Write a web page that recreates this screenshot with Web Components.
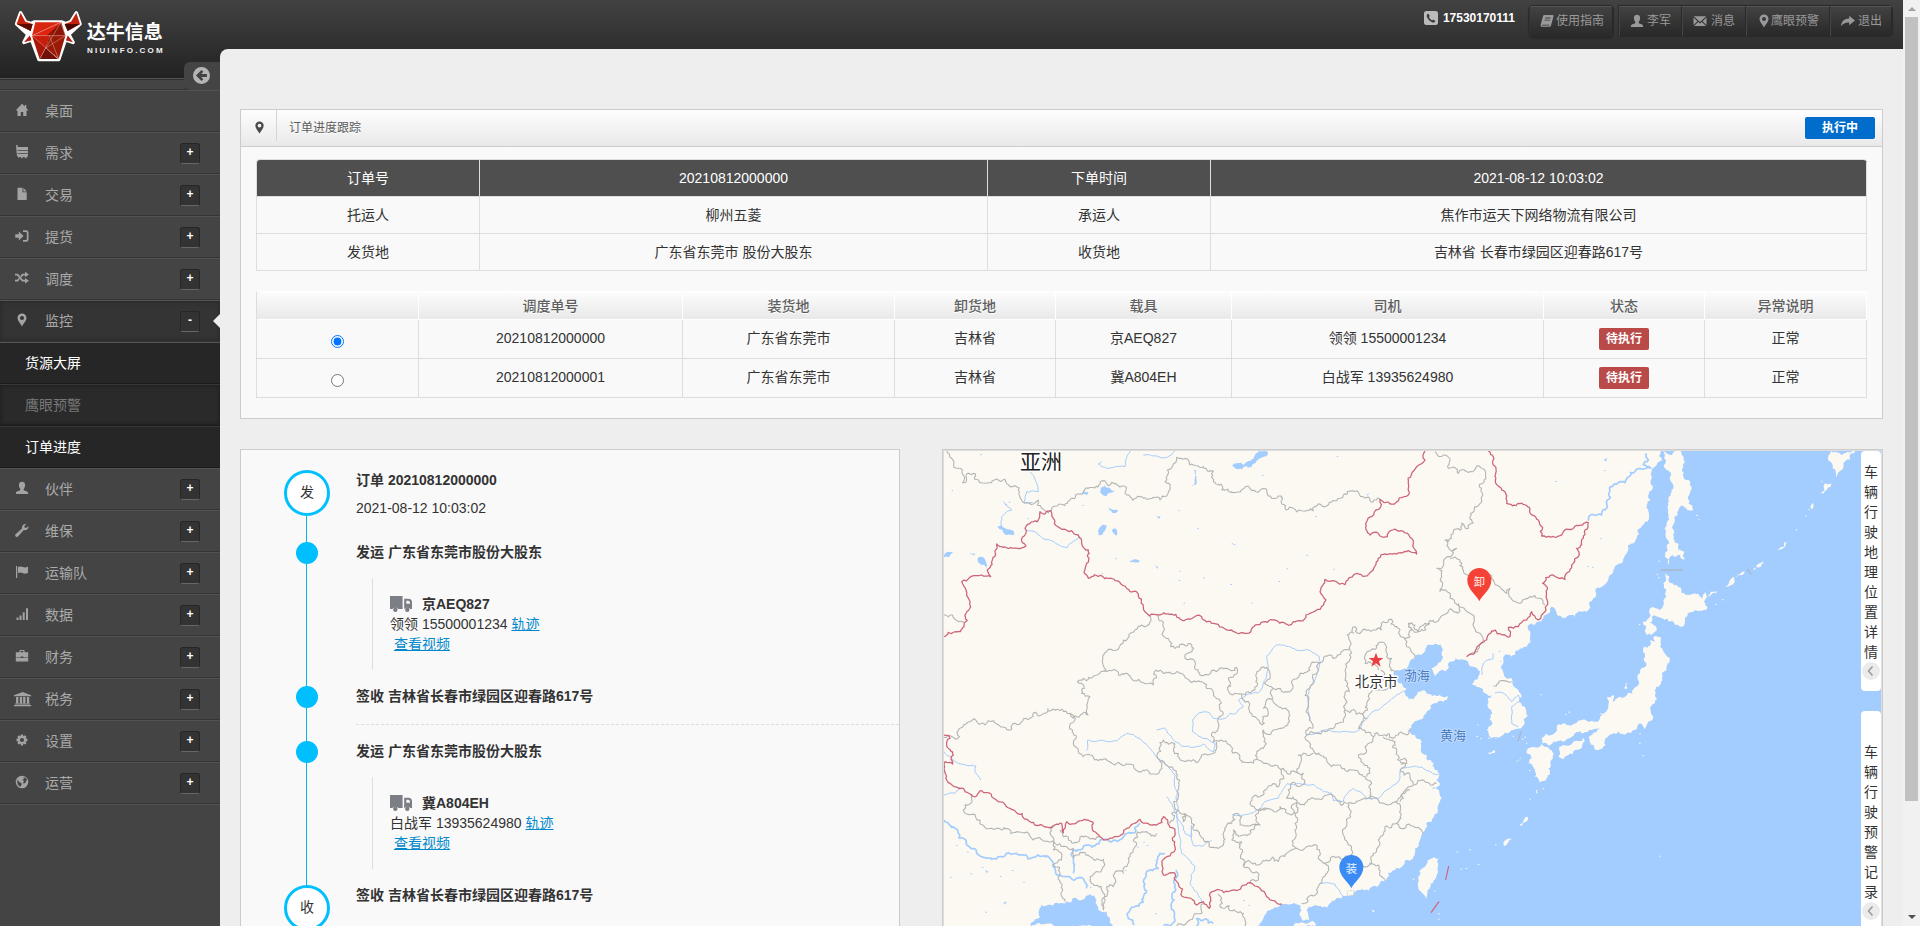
<!DOCTYPE html>
<html lang="zh-CN">
<head>
<meta charset="utf-8">
<title>订单进度跟踪</title>
<style>
html,body{margin:0;padding:0;height:926px;overflow:hidden;background:#eee}
body{font:14px/20px "Liberation Sans","Noto Sans CJK SC",sans-serif;color:#333}
</style>
</head>
<body>
<nf-app></nf-app>
<script>
const define = (name, css, html) => customElements.define(name, class extends HTMLElement {
  constructor() {
    super();
    this.attachShadow({mode: 'open'});
  }
  connectedCallback() {
    this.shadowRoot.innerHTML = `<style>*{box-sizing:border-box}${css}</style>${typeof html === 'function' ? html(this) : html}`;
  }
});

/* ---------- icons, 14 x 14 grid ---------- */
const ICONS = {
  home: '<path d="M7 .8.6 7.4h1.9V13h3.3V9h2.4v4h3.3V7.4h1.9L11.3 5V2H9.8v1.6z"/>',
  cart: '<path d="M1 0h1.6v2H13v3H2.6v.8H13v2.4H2.6V9H13v2.4h-1l-.6 1.8H10l-.5-1.3H8l-.5 1.3H6.3L6 12H4.5L4 13 2 10.8 1.6 7z"/>',
  file: '<path d="M2.5.8h5v4.4h4.2V13H2.5zM8.4.8l3.3 3.6H8.4z"/>',
  signin: '<path d="M.3 5.2h3.5V2.5L8.6 7l-4.8 4.5V8.8H.3zM8 1.3h3.2A2.3 2.3 0 0 1 13.5 3.600v6.800a2.300 2.300 0 0 1-2.300 2.300H8v-1.700h2.800q1 0 1-1V4q0-1-1-1H8z"/>',
  shuffle: '<path d="M0 2.7h3l5 6.1h2V7l4 2.7-4 2.800v-1.900H7.100l-5-6.100H0zM0 8.800h2.100l1.500-1.800 1.200 1.400L3 10.600H0zM5.300 5l1.800-2.300H10V.8l4 2.800-4 2.700V4.500H8L6.500 6.400z"/>',
  pin: '<path fill-rule="evenodd" d="M7 .5a4.500 4.500 0 0 0-4.500 4.500C2.500 7.700 5.200 10 7 13.500 8.800 10 11.500 7.700 11.500 5A4.500 4.500 0 0 0 7 .5zM7 2.900a2 2 0 1 1 0 4 2 2 0 0 1 0-4z"/>',
  user: '<path d="M7 .7c-2.100 0-3.300 1.500-3.100 3.500.2 1.900.8 2.700 1.300 3.600.3.700.2 1.300-.5 1.600L1.800 10.600Q.8 11.200.8 13h12.400q0-1.800-1-2.400L9.300 9.400c-.7-.3-.8-.9-.5-1.600.5-.9 1.100-1.700 1.300-3.600C10.300 2.200 9.100.7 7 .7z"/>',
  wrench: '<path d="M.6 11.200 7 5.500C6.400 3 8.500.5 11.300 1L9.200 3.200l.5 1.400 1.500.5 2.200-2.200c.5 2.700-2 4.800-4.600 4.200L3 13.500c-1.600 1.500-3.900-.8-2.400-2.300z"/>',
  flag: '<path d="M1 1h1.200v12H1zM3 2c2-1 3.500-.6 5 .1 1.600.7 3.300.5 5-.5v6.200c-1.700 1-3.400 1.200-5 .5-1.500-.7-3-1.100-5-.1z"/>',
  bars: '<path d="M1.500 10.500h2V13h-2zM4.500 8.500h2V13h-2zM7.700 5.200h2V13h-2zM11 1.300h2V13h-2z"/>',
  case: '<path d="M.8 3.200h3.600V2q0-1 1-1h3.200q1 0 1 1v1.200h3.600v5.200H8.300V7.600H5.700v.8H.8zM5.600 3.200h2.800V2.100H5.600zM.8 9h12.400v3.400H.8z" fill-rule="evenodd"/>',
  bank: '<path d="M7.500 0 15 3.200v1H0v-1zM1.800 5h2v6.300h-2zM5.100 5h2v6.300h-2zM8 5h2v6.300H8zM11.300 5h2v6.300h-2zM.9 11.600h13.200v1H.9zM0 13h15v1.200H0z"/>',
  gear: '<path fill-rule="evenodd" d="M6 1.500h2l.4 1.700 1.600-.9 1.500 1.500-.9 1.500 1.800.5v2.100l-1.800.5.9 1.600-1.500 1.500-1.600-.9L8 12.500H6l-.5-1.900-1.600.9L2.400 10l.9-1.600-1.800-.5V5.800l1.800-.5-.9-1.500 1.500-1.500 1.600.9zM7 4.900a2.100 2.100 0 1 0 0 4.200 2.100 2.100 0 0 0 0-4.200z"/>',
  globe: '<path fill-rule="evenodd" d="M7 .7a6.300 6.300 0 1 0 0 12.600A6.300 6.300 0 0 0 7 .7zM8 2l3.300 1.300L12 6l-1-.4-.3 1.900L9 8.500l-1-.3L9 6 7.300 4.800 9.200 3.700zM2.400 4.500l1.900 2.700 2 .6.3 1.900-1.400 2C3 10.700 1.700 8 2.400 4.500z"/>',
  phone: '<path fill-rule="evenodd" d="M2.500 0h9Q14 0 14 2.500v9q0 2.500-2.500 2.500h-9Q0 14 0 11.500v-9Q0 0 2.500 0zM4 2.500C2.600 3.400 2.500 5 3.200 6.600c1 2.200 2.600 3.800 4.700 4.600 1.500.5 3 .1 3.500-1.300L9.200 8.400l-1 1C6.800 8.900 5.500 7.500 4.900 6l1-.9z"/>',
  book: '<path fill-rule="evenodd" d="M4.600 1h8.200q1 .2.7 1.200l-2.500 9.300q-.3 1.300-1.600 1.300H1.700Q.2 12.600.6 11L3 2.300Q3.300 1 4.600 1zM5.200 3.500 5 4.400h5.400l.2-.9zM4.600 5.700l-.2.900h5.400l.2-.9zM1.900 10.700q-.2.900.5.9h6.800l.3-.9z"/>',
  mail: '<path d="M.8 2.300h12.400L7 8zM.5 3.600 4.400 7.200.5 11zM13.500 3.600 9.600 7.200l3.900 3.800zM5.200 7.900 7 9.500l1.800-1.600 4.200 4H1z"/>',
  share: '<path d="M8.200 1.800 14 6.500 8.200 11.200V8.500C4.800 8.200 2.300 9.200 0 12.200.4 7.400 3.300 4.700 8.200 4.500z"/>',
  back: '<path fill-rule="evenodd" d="M7 0a7 7 0 1 0 0 14A7 7 0 0 0 7 0zM7 2.500l1.500 1.500-1.700 1.800h4.700v2.500H6.800L8.500 10 7 11.500 2.400 7z"/>',
  truck: '<path fill-rule="evenodd" d="M0 0h8v11.300H5.300a2.200 2.200 0 0 0-3.800 0H0zM9 2.500h2.700q2.300.2 2.300 3v5.800h-1.100a2.200 2.200 0 0 0-3.800 0H9zM10.400 4.100v2.600h2.400q0-2.400-1.200-2.600z"/><ellipse cx="3.400" cy="12" rx="1.400" ry="1.900"/><ellipse cx="11" cy="12" rx="1.400" ry="1.900"/>'
};
define('nf-icon', ':host{display:block;width:14px;height:14px;flex:none}svg{display:block;width:100%;height:100%;overflow:visible;fill:currentColor}',
  el => `<svg viewBox="0 0 14 14" preserveAspectRatio="none">${ICONS[el.getAttribute('name')]}</svg>`);

/* ---------- brand ---------- */
define('nf-logo', ':host{display:block;height:78px;padding:10px 0 0 14px}svg{display:block}', `
<svg width="152" height="54" viewBox="42 30 456 162">
  <g stroke="#fff" stroke-width="11" stroke-linejoin="round" fill="#fff">
    <path d="M62 39 76 65 93 71 104 66H184L197 71 213 65 229 39 240 72 206 103 219 127 196 119 176 178H117L95 119 72 127 84 103 50 72z"/>
  </g>
  <path fill="#c3200d" d="M62 39 50 72 92 93 98 72 76 65z"/><path fill="#5d0c04" d="M50 72l42 21 6-21z"/>
  <path fill="#c3200d" d="M229 39 240 72 203 93 194 72 213 65z"/><path fill="#4d0a05" d="M194 72l46 0-37 21z"/>
  <path fill="#b51a0a" d="M90 106 72 127 95 121zM203 106l16 21-23-6z"/>
  <path stroke="#fff" stroke-width="6" fill="none" d="M105 67 93 106 118 178M184 67 200 106 176 178"/>
  <path fill="#d8260f" d="M106 67h74l-84 40z"/><path fill="#e0230e" d="M180 67 96 107h100z"/><path fill="#8b1507" d="M184 67 196 107H140z"/>
  <path fill="#a81708" d="M96 107h52l-12 38-17 32z"/><path fill="#c91d0b" d="M96 107 137 144 148 107z"/><path fill="#70100a" d="M137 144 119 177h55z"/><path fill="#9a1a08" d="M148 107h48l-20 70-39-33z"/>
  <g stroke="#eda295" stroke-width="1.500" fill="none"><path d="M96 107 182 68 137 144 119 177M96 107h100M96 107l80 70M182 68l14 39-59 37M148 107l28 70"/></g>
  <text x="260" y="118" fill="#fff" font-family="Noto Sans CJK SC,sans-serif" font-size="58" font-weight="700" textLength="228" lengthAdjust="spacingAndGlyphs">达牛信息</text>
  <text x="261" y="159" fill="#f2f2f2" font-family="Liberation Sans,sans-serif" font-size="24" font-weight="700" textLength="227" lengthAdjust="spacing">NIUINFO.COM</text>
</svg>`);

/* ---------- top bar ---------- */
define('nf-top-item', `:host{display:flex;align-items:center;height:30px;padding:0 0 1px 10px;gap:4px;font-size:12px;color:#999;background:linear-gradient(#424242,#282828);border-top:1px solid #555;border-right:1px solid #292929;border-left:1px solid #454545;white-space:nowrap}
:host([solo]){height:32px;padding-bottom:3px;border-radius:4px;border-left-color:#333;box-shadow:0 0 1px 1px #2a2a2a}nf-icon{width:14px;height:14px;margin-top:-1px}`,
  el => `<nf-icon name="${el.getAttribute('icon')}"></nf-icon><slot></slot>`);
define('nf-topbar', `:host{display:flex;height:49px;justify-content:flex-end;padding:6px 11px 0 0;align-items:flex-start}
.tel{display:flex;align-items:center;height:22px;gap:5px;color:#fff;font-weight:700;font-size:12px;margin-right:14px;padding-bottom:1px;margin-top:-1px;padding-top:5px}.tel nf-icon{color:#bbb}
.grp{display:flex;margin-left:6px;box-shadow:0 0 1px 1px #2a2a2a;border-radius:0 4px 4px 0}`, `
<div class="tel"><nf-icon name="phone"></nf-icon><span>17530170111</span></div>
<nf-top-item solo icon="book" style="width:84px;gap:2px">使用指南</nf-top-item>
<div class="grp">
<nf-top-item icon="user" style="width:63px;gap:3px">李军</nf-top-item><nf-top-item icon="mail" style="width:64px">消息</nf-top-item><nf-top-item icon="pin" style="width:84px;gap:0">鹰眼预警</nf-top-item><nf-top-item icon="share" style="width:62px;gap:3px">退出</nf-top-item>
</div>`);

/* ---------- side navigation ---------- */
define('nf-nav-item', `:host{display:flex;align-items:center;height:42px;padding:0 20px 0 15px;border-top:1px solid #525252;border-bottom:1px solid #353535;color:#aaa;background:#444;position:relative}
nf-icon{width:14px;height:14px;margin:-2px 16px 0 0;color:#a3a3a3}:host([icon=bank]) nf-icon{width:16px;margin:0 15px 0 -1px}b{margin-left:auto;width:20px;height:21px;border-radius:3px;background:#333;border:1px solid #262626;border-bottom-color:#666;color:#fff;font-size:12px;line-height:17px;text-align:center}
:host([open]){background:#343434;box-shadow:inset 0 0 5px #262626}
i{position:absolute;right:0;top:13px;border:7px solid transparent;border-right-color:#eee;border-left:0}`,
  el => `<nf-icon name="${el.getAttribute('icon')}"></nf-icon><slot></slot>${el.hasAttribute('plain') ? '' : `<b>${el.hasAttribute('open') ? '-' : '+'}</b>`}${el.hasAttribute('open') ? '<i></i>' : ''}`);
define('nf-sub-item', `:host{display:block;height:42px;line-height:40px;padding-left:25px;color:#fff;background:#262626;border-top:1px solid #383838;border-bottom:1px solid #1b1b1b}:host([muted]){color:#777;background:#2a2a2a;box-shadow:inset 0 0 4px #1a1a1a}:host([first]){border-top-color:#525252}`, '<slot></slot>');
define('nf-sidebar', `:host{display:block;position:relative;height:848px;background:#444;border-top:1px solid #525252}
.strip{height:11px;border-top:1px solid #303030;border-bottom:1px solid #353535}
.toggle{position:absolute;right:0;top:-17px;width:36px;height:29px;background:#444;border-radius:6px 0 0 6px;border-bottom:1px solid #303030;color:#b5b5b5;padding:5px 0 0 9px}.toggle nf-icon{width:17px;height:17px}
.end{border-top:1px solid #525252}`, `
<div class="strip"></div><div class="toggle"><nf-icon name="back"></nf-icon></div>
<nf-nav-item icon="home" plain>桌面</nf-nav-item><nf-nav-item icon="cart">需求</nf-nav-item><nf-nav-item icon="file">交易</nf-nav-item><nf-nav-item icon="signin">提货</nf-nav-item><nf-nav-item icon="shuffle">调度</nf-nav-item>
<nf-nav-item icon="pin" open>监控</nf-nav-item><nf-sub-item first>货源大屏</nf-sub-item><nf-sub-item muted>鹰眼预警</nf-sub-item><nf-sub-item>订单进度</nf-sub-item>
<nf-nav-item icon="user">伙伴</nf-nav-item><nf-nav-item icon="wrench">维保</nf-nav-item><nf-nav-item icon="flag">运输队</nf-nav-item><nf-nav-item icon="bars">数据</nf-nav-item><nf-nav-item icon="case">财务</nf-nav-item><nf-nav-item icon="bank">税务</nf-nav-item><nf-nav-item icon="gear">设置</nf-nav-item><nf-nav-item icon="globe">运营</nf-nav-item><div class="end"></div>`);

/* ---------- order panel ---------- */
define('nf-badge', ':host{display:inline-block;height:22px;line-height:22px;width:50px;text-align:center;border-radius:2px;background:#b94a48;color:#fff;font-size:12px;font-weight:700}:host([wide]){width:70px;background:#006dcc}', '<slot></slot>');
define('nf-panel', `:host{display:block;border:1px solid #ccc;background:#f9f9f9}
header{display:flex;height:37px;border-bottom:1px solid #ccc;background:linear-gradient(#fdfdfd,#e9e9e9);font-size:12px;color:#666;padding-right:7px}
.ic{width:36px;height:31px;border-right:1px solid #d5d5d5;padding:11px 0 0 12px;color:#4a4a4a}.ic nf-icon{width:13px;height:13px}
.t{flex:1;padding:8px 0 0 12px;color:#5c5c5c;text-shadow:0 1px 0 #fff}header ::slotted(*){margin-top:7px}.body{padding:12px 15px 20px}`, `
<header><div class="ic"><nf-icon name="pin"></nf-icon></div><div class="t">订单进度跟踪</div><slot name="status"></slot></header><div class="body"><slot></slot></div>`);
define('nf-order-info', `:host{display:grid;grid-template-columns:223px 508px 223px 656px;border-top:1px solid #ddd;border-left:1px solid #ddd;border-radius:4px 4px 0 0;text-align:center;overflow:hidden}
div{height:37px;line-height:36px;border-right:1px solid #ddd;border-bottom:1px solid #ddd}.h{background:#4f4f4f;color:#fff}`, `
<div class="h">订单号</div><div class="h">20210812000000</div><div class="h">下单时间</div><div class="h">2021-08-12 10:03:02</div>
<div>托运人</div><div>柳州五菱</div><div>承运人</div><div>焦作市运天下网络物流有限公司</div>
<div>发货地</div><div>广东省东莞市 股份大股东</div><div>收货地</div><div>吉林省 长春市绿园区迎春路617号</div>`);
const dispatch = [
  ['20210812000000', '广东省东莞市', '吉林省', '京AEQ827', '领领 15500001234'],
  ['20210812000001', '广东省东莞市', '吉林省', '冀A804EH', '白战军 13935624980']
];
define('nf-dispatch-table', `:host{display:grid;grid-template-columns:162px 264px 212px 161px 176px 312px 161px 162px;margin-top:20px;text-align:center;border-left:1px solid #ddd;border-top:1px solid #fff}
.h{height:28px;line-height:28px;border-right:1px solid #fff;border-bottom:1px solid #fff;background:linear-gradient(#fcfcfc,#e9e9e9);color:#5f5f5f;font-weight:500;text-shadow:0 1px 0 #fff}
.c{height:39px;line-height:37px;border-right:1px solid #ddd;border-bottom:1px solid #ddd}
input{display:block;width:13px;height:13px;margin:15px auto 0}nf-badge{vertical-align:top;margin-top:8px}`,
  () => ['', '调度单号', '装货地', '卸货地', '载具', '司机', '状态', '异常说明'].map(h => `<div class="h">${h}</div>`).join('') +
    dispatch.map((r, i) => `<div class="c"><input type="radio" name="d" ${i ? '' : 'checked'}></div>${r.map(c => `<div class="c">${c}</div>`).join('')}<div class="c"><nf-badge>待执行</nf-badge></div><div class="c">正常</div>`).join(''));

/* ---------- timeline ---------- */
define('nf-step', `:host{display:flex;padding-left:43px}
.rail{width:46px;flex:none;display:flex;flex-direction:column;align-items:center}
.rail::after{content:"";flex:1;width:1px;margin-right:1px;background:#00b7f0}
.dot{width:22px;height:22px;border-radius:50%;background:#00bfff;flex:none}
.big{width:46px;height:46px;border:3px solid #00bfff;background:#fff;line-height:39px;text-align:center}
.body{flex:1;margin-left:26px;min-width:0}`,
  el => `<div class="rail"><div class="dot ${el.hasAttribute('mark') ? 'big' : ''}">${el.getAttribute('mark') || ''}</div></div><div class="body"><slot></slot></div>`);
define('nf-truck', `:host{display:block;height:92px;margin:16px 0 0 16px;border-left:1px solid #ddd;padding:15px 0 0 17px}
.p{display:flex;align-items:center;height:21px;gap:10px;font-weight:700}nf-icon{width:22px;height:16px;color:#7b7e85;margin-top:1px}a{color:#08c;text-decoration:underline}`,
  el => `<div class="p"><nf-icon name="truck"></nf-icon>${el.getAttribute('plate')}</div><div>${el.getAttribute('driver')} <a>轨迹</a></div><div>&nbsp;<a>查看视频</a></div>`);
define('nf-timeline', `:host{display:block;width:660px;height:700px;border:1px solid #ccc;background:#f9f9f9;padding-top:20px}
b{display:block}.d{border-bottom:1px dashed #ddd;height:19px}`, `
<nf-step mark="发" style="height:72px"><b>订单 20210812000000</b><div style="padding-top:8px">2021-08-12 10:03:02</div></nf-step>
<nf-step style="height:144px"><b>发运 广东省东莞市股份大股东</b><nf-truck plate="京AEQ827" driver="领领 15500001234"></nf-truck></nf-step>
<nf-step style="height:55px"><b>签收 吉林省长春市绿园区迎春路617号</b><div class="d"></div></nf-step>
<nf-step style="height:144px"><b>发运 广东省东莞市股份大股东</b><nf-truck plate="冀A804EH" driver="白战军 13935624980"></nf-truck></nf-step>
<nf-step mark="收" style="height:90px"><b>签收 吉林省长春市绿园区迎春路617号</b></nf-step>`);

/* ---------- map ---------- */
let seed = 7;
const rnd = () => (seed = (seed * 16807) % 2147483647) / 2147483647 - .5;
/* Splits each segment around displaced midpoints, for a natural coast or border. */
function trace(str, amp = .22, closed = false, dx = 0) {
  const n = str.trim().split(/[\s,]+/).map(Number), pts = [];
  for (let i = 0; i < n.length; i += 2) pts.push([n[i] + dx, n[i + 1]]);
  if (closed) pts.push(pts[0]);
  let out = 'M' + pts[0];
  const split = (a, b) => {
    const x = b[0] - a[0], y = b[1] - a[1], l = Math.hypot(x, y);
    if (l < 9 || l > 700) { out += 'L' + b.map(v => Math.round(v * 10) / 10); return; }
    const k = rnd() * amp * Math.min(1, 45 / l) * 2, m = [(a[0] + b[0]) / 2 - y * k, (a[1] + b[1]) / 2 + x * k];
    split(a, m); split(m, b);
  };
  for (let i = 1; i < pts.length; i++) split(pts[i - 1], pts[i]);
  return out + (closed ? 'Z' : '');
}
const E = 1410;
const sea = [
 '2192,33 2175,80 2165,115 2162,180 2152,245 2115,305 2090,340 2050,395 2015,440 1990,475 1955,515 1910,530 1880,518 1865,500 1850,522 1825,545 1795,570 1793,615 1755,645 1720,660 1713,685 1745,715 1775,770 1785,800 1782,855 1740,875 1685,895 1675,860 1682,830 1675,790 1685,765 1655,745 1628,735 1648,705 1642,685 1615,665 1595,658 1560,665 1515,708 1505,685 1535,645 1537,625 1520,612 1500,615 1480,640 1455,655 1438,668 1432,690 1400,690 1390,700 1392,718 1415,730 1428,745 1427,768 1450,778 1460,765 1475,752 1495,762 1520,768 1553,768 1540,785 1520,790 1490,815 1450,850 1432,870 1455,885 1475,905 1490,945 1510,968 1512,985 1528,1000 1530,1035 1505,1045 1528,1060 1535,1075 1525,1095 1522,1120 1505,1145 1485,1170 1472,1195 1455,1225 1450,1250 1420,1275 1370,1318 1340,1340 1290,1350 1270,1365 1235,1375 1200,1390 1150,1398 1130,1410 1138,1440 1120,1442 1108,1425 1112,1397 1085,1392 1050,1395 1020,1410 1000,1435 975,1460 975,2200 2900,2200 2900,33',
 '300,1462 330,1430 335,1395 380,1388 410,1385 440,1375 480,1362 500,1380 505,1410 540,1440 558,1462'
];
const isles = [
 '790,33 842,33 848,75 860,120 868,165 880,210 850,198 835,212 822,250 820,295 835,330 853,335 853,360 840,345 818,345 808,375 800,355 808,310 800,250 802,200 812,160 800,90',
 '797,398 830,435 870,465 905,475 915,455 912,485 922,505 900,512 880,515 855,535 848,560 820,545 785,535 755,530 750,548 770,565 765,575 740,585 738,560 728,545 752,525 750,505 780,510 790,480 790,430',
 '750,600 765,605 765,588 782,592 780,620 798,645 800,690 783,725 768,740 765,790 752,810 760,830 745,845 735,868 720,850 700,870 680,880 655,875 640,880 628,885 608,925 590,930 568,905 575,885 600,865 575,870 550,880 515,890 490,905 460,905 425,910 425,895 455,885 490,850 530,848 560,842 590,845 600,830 625,795 622,770 640,765 640,785 675,770 710,740 720,700 735,650 732,620 750,618',
 '490,915 520,905 552,895 545,925 525,930 505,945 490,958 475,950 478,920',
 '400,920 425,912 440,920 458,950 445,985 440,1015 420,1028 402,1010 405,990 385,970 395,955 380,940',
 '262,937 285,930 285,938 268,943', '103,1252 117,1256 112,1290 100,1325 82,1360 78,1376 70,1362 55,1345 55,1315 75,1280 90,1258',
 '1292,33 1365,33 1350,60 1325,90 1308,112 1298,85', '1255,160 1275,130 1298,124 1280,150', '1060,390 1075,372 1090,364 1080,382', '970,445 1000,412 1035,396 1005,425', '921,480 932,455 955,450 935,462',
 '1134,332 1160,306 1150,322', '1232,205 1240,190 1238,207', '355,1160 375,1132 383,1130 365,1150', '312,1218 320,1198 335,1196', '408,1058 413,1048 414,1060', '345,965 362,950 356,962', '675,748 682,728 682,745', '-320,1458 -315,1450 -290,1448 -262,1442 -255,1460'
];
const specks = '1216,226 1186,268 1263,122 945,492 965,478 775,362 770,402 773,412 716,552 496,822 504,815 421,763 718,880 716,908 727,946 170,1235 206,1228 233,1272 182,1286 196,1284 778,1247 285,1213 427,1045 388,1076 102,1352 37,1316 114,1420 115,1436 228,888 240,895 232,853 264,893 285,893 338,887 372,890 366,896 378,908 600,820 888,225 895,238 385,935 387,990 1225,208 -85,1410 -82,1413';
const gray = [
 '50,33 98,128 110,118 113,100 130,100 135,118 150,128 185,128 200,117 225,118 240,140 268,155 285,190 310,192 325,180 335,205 345,212 365,212 378,198 412,190 428,175 460,160 475,145 510,132 518,122 535,137 583,138 590,165 630,170 670,172 690,180 710,168 720,140 705,125 712,90 728,80 740,52 780,75 820,80 850,92 855,128 875,150 910,158 960,145 1010,148 1045,168 1055,192 1090,205 1115,212 1150,212 1180,200 1220,182 1240,165 1268,152 1310,172 1350,176',
 '42,525 68,525 82,542 102,545', '655,527 645,560 612,575 580,600 565,628 535,628 528,690 518,694 450,720 442,725 455,730 455,760 480,770 470,795 474,825 420,820 432,830 422,850 430,880 430,910 445,935 480,945 515,960 560,970 600,972 625,995 660,1002 690,990 690,965',
 '683,527 700,560 702,590 722,620 748,622 748,615 785,615 786,635 765,655 795,665 805,690 835,705 860,695 890,685 918,682 920,702 895,715 893,742 935,762',
 '518,694 545,692 565,705 600,708 610,722 640,728 670,735 678,690 700,700 740,695 770,715 800,725 830,745 868,778 880,820 865,850 845,880 850,905 872,900 900,915 930,950 955,968 980,958',
 '420,820 370,808 312,818 300,835 255,850 200,852 190,842 165,855 108,852 88,890 42,892',
 '935,762 975,750 980,700 1010,682 1003,730 1030,745 1080,755 1085,730 1110,700 1140,680 1170,668 1200,645 1260,630 1252,585 1275,560 1290,580 1355,570 1360,545 1385,538 1395,560 1410,570 1420,592 1440,590 1435,550 1455,555 1465,575 1500,550',
 '935,762 955,785 958,810 975,830 990,850 1003,850 998,830 1015,820 1000,805 1010,780 1028,775 1030,745', '1028,778 1045,800 1072,810 1073,855 1042,868 1000,870 1005,895 1000,925 980,935 980,958 1010,970 1060,985 1105,1000 1110,970 1105,945 1150,940',
 '1170,668 1150,720 1140,745 1135,790 1138,840 1130,885 1160,880 1200,865 1225,850 1245,830 1242,770 1258,755 1245,720 1250,680 1262,632', '1130,885 1140,910 1155,940 1190,960 1230,975 1270,990 1305,1010 1325,1030 1328,1078',
 '1245,812 1295,822 1310,835 1285,865 1330,890 1360,885 1390,895 1430,885 1440,865','1295,822 1310,790 1345,750 1375,745 1360,720 1352,690', '1422,592 1430,620 1450,640 1455,655', '1305,670 1308,640 1335,628 1345,608 1370,622 1370,650 1385,655 1378,680 1395,695', '1305,670 1325,672 1345,690',
 '1330,890 1315,910 1310,935 1285,945 1300,970 1320,985 1310,1010', '1360,890 1395,905 1400,935 1425,970 1410,990 1450,1035 1520,1030', '1450,1035 1420,1060 1395,1085 1340,1075 1255,1090 1220,1080 1180,1070 1140,1078 1100,1088 1070,1075 1075,1050 1125,1030 1120,1000 1105,1000',
 '690,965 725,980 740,1010 745,1060 745,1110 760,1145 765,1120 785,1140 790,1170 820,1195 845,1222 880,1215 880,1180 905,1150 910,1125 935,1130 930,1155 990,1155 985,1120 1010,1105 1050,1100 1090,1120 1098,1088', '690,965 690,920 700,900 735,912 730,930 750,960 800,968 815,945 850,940 860,905',
 '905,1200 910,1170 960,1172 990,1155', '905,1200 935,1205 935,1240 945,1265 940,1278 985,1300 985,1320 960,1330', '1098,1088 1095,1150 1098,1180 1100,1225 1070,1240 1010,1260 940,1278', '1100,1225 1130,1220 1160,1215 1170,1260 1190,1275 1180,1310 1160,1350 1115,1390',
 '1255,1090 1262,1130 1245,1165 1255,1215 1255,1250 1225,1250 1175,1265', '1255,1250 1290,1275 1318,1275 1330,1240 1345,1200 1365,1160 1400,1150 1395,1085','1318,1270 1345,1275 1365,1318','1400,1150 1480,1180', '1060,985 1062,1015 1040,1040 1000,1055 970,1070 960,1090 985,1110 1010,1105',
 '125,1062 100,1110 150,1140 200,1165 260,1175 310,1200 375,1210 430,1225 430,1255 520,1258 515,1290 480,1310 485,1330 515,1350 520,1410 530,1340 550,1340 550,1305 580,1300 595,1255 610,1200 650,1175 680,1180', '375,1155 370,1230 395,1260 370,1275 390,1300 405,1385','390,1170 400,1190 450,1197 510,1190',
 '745,1110 725,1120 718,1150', '820,1390 790,1430 740,1458', '865,1362 870,1400 920,1415 945,1440 945,1458',
 '1515,35 1545,45 1555,85 1585,100 1620,95 1640,78 1668,115 1640,200 1615,265 1595,250 1545,300 1560,330 1580,325 1560,350 1520,385 1535,410 1530,455 1560,460 1590,500 1620,520 1650,580 1655,610 1615,645', '1560,355 1590,360 1600,390 1650,410 1690,420 1730,460 1740,445 1770,490 1800,470 1845,495', '1585,490 1590,512 1540,525 1485,550 1465,575 1440,548','1690,738 1720,722 1745,725',
 '1410,1085 1440,1050', '1410,960 1425,955 1430,970 1412,972'
];
const red = [
 '42,590 102,560 108,520 122,500 118,480 108,450 95,425 120,412 155,405 182,410 172,390 200,312 220,322 262,325 288,318 285,265 300,250 322,245 330,215 362,212 370,235 395,268 425,272 445,285 455,310 475,330 470,370 462,395 475,415 555,422 600,455 622,458 640,500 658,527 685,525 750,537 815,530 850,550 905,570 950,580 1035,540 1100,543 1140,520 1188,480 1170,455 1185,418 1245,434 1275,402 1320,398 1345,355 1390,342 1460,342 1450,310 1412,272 1388,270 1372,290 1345,280 1320,285 1308,268 1325,230 1350,178 1385,192 1435,165 1435,130 1460,80 1485,60 1485,33',
 '42,885 60,895 50,915 70,945 68,972 45,965 42,985 60,1030 100,1045 140,1068 155,1052 205,1085 245,1108 300,1145 375,1155 395,1150 400,1178 410,1145 455,1142 490,1150 510,1190 560,1190 590,1165 630,1138 680,1155 700,1130 720,1162 735,1168 735,1220 695,1265 700,1305 735,1300 745,1330 755,1368 800,1395 820,1385 838,1405 840,1360 870,1350 920,1352 960,1328 990,1345 1010,1370 1055,1392',
 '1675,33 1690,75 1715,150 1730,190 1765,190 1800,208 1825,240 1835,288 1890,287 1905,270 1975,248 1965,270 1960,295 1940,325 1930,370 1905,418 1865,405 1838,430 1848,470 1845,515 1825,540 1805,515 1790,540 1765,560 1735,562 1740,590 1695,570 1670,600 1640,625 1610,650'
];
const rivers = [
 '300,95 320,130 325,155 290,155 282,185 308,188','220,185 245,210 215,230 215,260 250,285','288,270 320,278 345,298 412,323 450,288','515,65 505,72 530,85 585,80 590,52 600,33','640,45 710,53 735,33',
 '470,932 473,900 560,903 590,880 630,895 660,925 690,960 735,1005 745,1100 755,1240 795,1280 780,1330 820,1390','680,870 705,865 725,890 755,918 790,922 820,912 850,935 855,910 810,890 788,875 788,840 805,820 838,818 850,835 885,835 900,820 915,822 940,800 925,780 950,765 985,758 1010,710 1010,650 1040,615 1060,615 1098,630 1130,628 1168,650 1168,680 1155,720 1140,740 1140,840',
 '1130,885 1190,868 1210,875 1285,872 1300,845 1370,790 1430,750','907,1123 955,1123 980,1112 1005,1085 1045,1075 1072,1030 1150,1032 1180,1055 1205,1060 1210,1082 1240,1085 1270,1045 1290,1055 1308,1078 1345,1075 1370,1050 1400,1030 1412,990 1455,978 1490,992 1530,1005','710,1070 745,1140 765,1180 782,1190 785,1155 792,1218 820,1218 845,1200',
 '42,935 90,972 138,978 135,995 152,1020','42,1065 75,1060 90,1040','1170,1330 1215,1332 1240,1370','1690,640 1690,655 1660,670 1655,705','1695,758 1715,758 1745,785 1765,765 1770,785 1745,800 1745,850 1765,860'
];
const wide = ['42,1140 75,1165 110,1215 185,1258 235,1238 355,1250 370,1280 410,1310 440,1315 470,1345','430,1300 430,1230 495,1218 580,1190 630,1150','705,1240 690,1240 685,1285 650,1295 640,1370 600,1410 612,1455','738,1290 732,1380 735,1440 700,1455','2160,80 2115,95 2085,128 2050,135 2040,150 2030,190 2015,225 1975,242','2150,40 2140,75 2165,85','800,1458 800,1435 850,1450'];
const lakes = ['905,78 940,75 962,62 975,45 990,33 1012,33 1010,48 980,62 965,82 925,88','790,88 805,88 800,125 785,138','512,150 525,135 540,145 555,152 530,168 515,162','510,262 530,255 525,272 505,285','545,272 555,265 558,288','535,205 565,212 550,220','200,260 225,265 255,285 230,285','42,345 55,335 70,338 55,352 42,352','145,352 160,352 170,385 148,370','118,340 135,340 132,347','1305,160 1320,158 1315,172','672,375 685,380 682,387','2020,60 2030,52 2032,64','598,362 612,358 630,366 610,366','455,157 475,157 470,165','680,228 692,228 688,236','220,1388 232,1386 226,1394','165,1290 180,1292 172,1300'];
const ponds = '65,150 150,42 555,355 748,392 745,420 820,412 905,310 910,312 760,488 963,488 900,432 1045,423 1070,385 1128,344 1210,386 745,210 800,265 1155,228 1055,170 995,104 1220,48 515,400 235,185 225,192 292,235 328,50 456,195 240,1180 85,1190 105,1205 78,1215 110,1235 155,1280 210,1308 245,1290 345,1250 280,1325 165,1415 470,1335 640,1205 620,1220 650,1215 585,1290 675,1420 940,1380 955,1395 1875,123 2010,295 1972,378 1985,380 2022,90 480,1340 120,1300 60,1310 1710,663 1705,632';
const dots = (s, c, w = 4) => { const n = s.split(/[\s,]+/).map(Number); let r = ''; for (let i = 0; i < n.length; i += 2) r += `M${n[i]} ${n[i + 1]}h${w + (i % 3)}v${w - 1}h-${w}z`; return `<path fill="${c}" d="${r}"/>`; };
define('nf-side-tab', `:host{position:absolute;right:0;top:0;width:20px;height:240px;border-radius:4px;background:#fff;text-align:center;padding-top:11px}
:host([second]){top:260px;padding-top:31px}span{display:block;height:20px}.c{width:18px;height:18px;border-radius:50%;background:#ebebeb;margin:0 auto}svg{display:block}`,
  el => [...el.getAttribute('label')].map(c => `<span>${c}</span>`).join('') + '<div class="c"><svg width="18" height="18"><path d="M10.500 4.500 6.500 9l4 4.500" fill="none" stroke="#999" stroke-width="1.500"/></svg></div>');
const pinPath = 'M0 0C-6-16-36-34-36-62A36 36 0 1 1 36-62C36-34 6-16 0 0z';
define('nf-map', `:host{display:block;position:relative;width:941px;height:700px;border:1px solid #ccc;box-shadow:inset 0 0 0 1px #ddd;padding:1px}
.in{position:relative;width:937px;height:696px;background:#fcf9f2}svg{display:block}.labels{position:absolute;left:0;top:0;overflow:visible}text{font-family:"Noto Sans CJK SC",sans-serif}`, () => {
  const W = '#a3ccff', L = '#fcf9f2', p = (list, a, c, dx) => list.map(s => trace(s, a, c, dx)).join('');
  return `<div class="in"><svg width="937" height="696" viewBox="42 33 2811 2088">
<path fill="${W}" d="${p(sea, .3, true)}"/>
<path fill="${L}" d="${p(isles, .28, true, E)}"/><g transform="translate(${E},0)">${dots(specks, L)}</g>
<path fill="${W}" d="${p(lakes, .25, true)}"/>${dots(ponds, W)}
<g fill="none" stroke-linejoin="round"><path stroke="${W}" stroke-width="3" d="${p(rivers, .12)}"/><path stroke="${W}" stroke-width="5" d="${p(wide, .3)}"/>
<path stroke="#b3b5b5" stroke-width="3.300" d="${p(gray, .34)}"/><path stroke="#cc6577" stroke-width="3.800" d="${p(red, .24)}"/>
<path stroke="#cc6577" stroke-width="3.500" d="M1556 1278 1547 1320M1527 1385 1503 1418"/><path stroke="#a9b8c8" stroke-width="4" d="M2192 390h67M2452 387l12 17M1774 873l-10 30"/></g>
<path fill="#ea3f42" d="M1338 638l6 16h16l-13 10 5 16-14-10-14 10 5-16-13-10h16z"/></svg>
<svg class="labels" width="937" height="696" viewBox="42 33 2811 2088">
<g stroke-linejoin="round" paint-order="stroke" stroke="#fff" stroke-width="9">
<text x="270" y="87" font-size="63" fill="#222">亚洲</text><text x="1274" y="741" font-size="43" fill="#333">北京市</text>
<text x="1421" y="721" font-size="39" fill="#4a7dbf" stroke="#c5dfff" stroke-width="5">渤海</text><text x="1530" y="901" font-size="39" fill="#4a7dbf" stroke="#c5dfff" stroke-width="5">黄海</text></g>
<g transform="translate(1648,484)"><path fill="#f44336" d="${pinPath}" transform="scale(1,1.020)"/><text y="-47" text-anchor="middle" font-size="34" font-weight="500" fill="#ffd9d4">卸</text></g>
<g transform="translate(1264,1345)"><ellipse cy="14" rx="13" ry="8" fill="none" stroke="#cfcfcf" stroke-width="3" stroke-dasharray="5 4"/><path fill="#3b8bf5" d="${pinPath}" transform="scale(1,1.020)"/><text y="-47" text-anchor="middle" font-size="34" font-weight="500" fill="#d8e8ff">装</text></g>
</svg><nf-side-tab label="车辆行驶地理位置详情"></nf-side-tab><nf-side-tab second label="车辆行驶预警记录"></nf-side-tab></div>`;
});

/* ---------- page shell ---------- */
define('nf-scrollbar', `:host{display:flex;flex-direction:column;width:17px;height:926px;background:#f1f1f1;align-items:center}
.u,.d{width:0;height:0;border:4px solid transparent}.u{border-bottom-color:#a3a3a3;border-top:0;margin:7px 0 6px}.d{border-top-color:#505050;border-bottom:0;margin:114px 0 0}.t{width:13px;height:784px;background:#c1c1c1}`, '<div class="u"></div><div class="t"></div><div class="d"></div>');
define('nf-app', `:host{display:grid;grid-template-columns:220px 1683px 17px;height:926px;overflow:hidden;background:linear-gradient(#424242,#222) 0 0/100% 78px no-repeat,#444}
main{height:877px;background:#eee;border-radius:8px 0 0 0;padding:60px 20px 0;overflow:hidden}.row{display:flex;justify-content:space-between;margin-top:30px}`, `
<div><nf-logo></nf-logo><nf-sidebar></nf-sidebar></div>
<div><nf-topbar></nf-topbar><main><nf-panel><nf-badge slot="status" wide>执行中</nf-badge><nf-order-info></nf-order-info><nf-dispatch-table></nf-dispatch-table></nf-panel>
<div class="row"><nf-timeline></nf-timeline><nf-map></nf-map></div></main></div><nf-scrollbar></nf-scrollbar>`);
</script>
</body>
</html>
